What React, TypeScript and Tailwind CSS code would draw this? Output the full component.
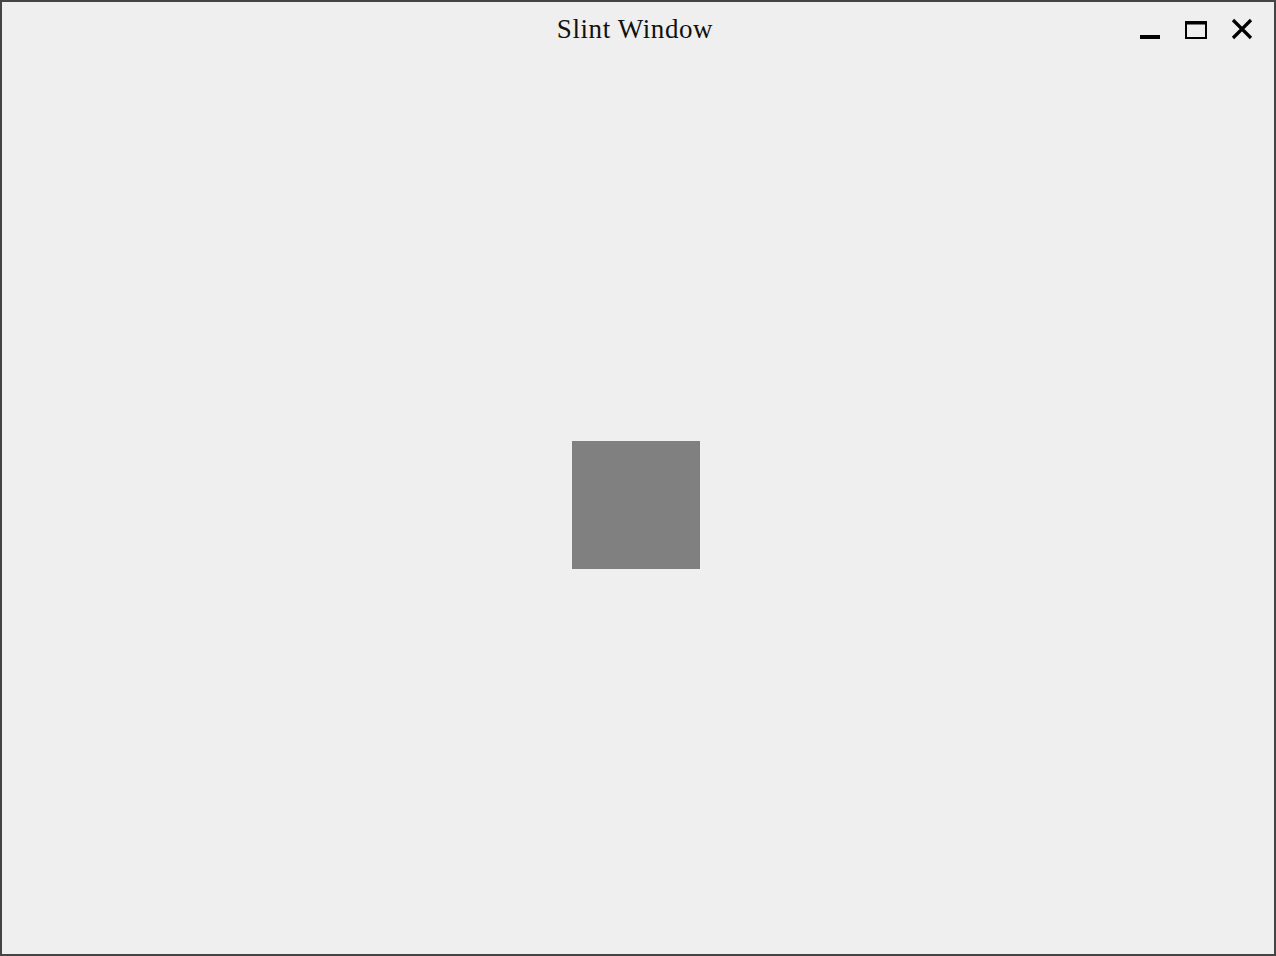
export default function App() {
  return (
    <div className="flex h-[956px] w-[1276px] flex-col border-2 border-[#444444] bg-[#efefef]">
      <div className="relative flex h-[54px] shrink-0 items-start justify-center">
        <span
          className="mr-[6px] mt-[12px] text-[27px] leading-[30px] tracking-[0.6px] text-[#111111]"
          style={{ fontFamily: '"Liberation Serif", "DejaVu Serif", serif' }}
        >
          Slint Window
        </span>
        <div className="absolute right-[21px] top-[15px] flex items-start gap-[24px]">
          <svg width="22" height="24" viewBox="0 0 22 24">
            <rect x="1" y="18" width="20" height="4" fill="#000" />
          </svg>
          <svg width="22" height="24" viewBox="0 0 22 24">
            <rect x="1" y="5" width="20" height="16" fill="none" stroke="#000" strokeWidth="2" />
            <rect x="0" y="4" width="22" height="3.5" fill="#000" />
          </svg>
          <svg width="22" height="24" viewBox="0 0 22 24">
            <path d="M2 3 L20 21 M20 3 L2 21" stroke="#000" strokeWidth="3.2" />
          </svg>
        </div>
      </div>
      <div className="flex flex-1 items-center justify-center pr-[4px]">
        <div className="h-[128px] w-[128px] bg-[#808080]" />
      </div>
    </div>
  );
}
